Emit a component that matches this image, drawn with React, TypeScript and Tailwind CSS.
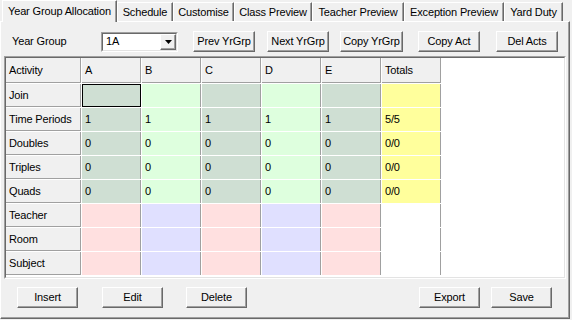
import React from "react";

const FONT = { fontFamily: '"Liberation Sans", Arial, sans-serif' };

function Btn({ label, w, className = "" }: { label: string; w: string; className?: string }) {
  return (
    <div
      className={`${w} h-[21px] flex items-center justify-center bg-[#f0f0f0] border border-t-white border-l-white border-r-[#696969] border-b-[#696969] shadow-[inset_-1px_-1px_0_#a0a0a0] text-black ${className}`}
    >
      {label}
    </div>
  );
}

const tabs = [
  { label: "Schedule", w: "w-[56px]" },
  { label: "Customise", w: "w-[61px]" },
  { label: "Class Preview", w: "w-[78px]" },
  { label: "Teacher Preview", w: "w-[92px]" },
  { label: "Exception Preview", w: "w-[100px]" },
  { label: "Yard Duty", w: "w-[59px]" },
];

const rows = ["Join", "Time Periods", "Doubles", "Triples", "Quads", "Teacher", "Room", "Subject"];
const cols = ["A", "B", "C", "D", "E"];

function cellColor(r: number, c: number): string {
  const odd = c % 2 === 0; // A, C, E
  if (r <= 4) return odd ? "bg-[#cfdfd3]" : "bg-[#deffde]";
  return odd ? "bg-[#ffe0e0]" : "bg-[#e0e0ff]";
}

function cellValue(r: number): string {
  if (r === 1) return "1";
  if (r >= 2 && r <= 4) return "0";
  return "";
}

function totalValue(r: number): string {
  if (r === 1) return "5/5";
  if (r >= 2 && r <= 4) return "0/0";
  return "";
}

export default function App() {
  return (
    <div
      className="w-[572px] h-[320px] bg-[#f0f0f0] overflow-hidden text-[11px] tracking-[-0.15px] text-black leading-none"
      style={FONT}
    >
      {/* Tabs */}
      <div className="relative z-10 flex h-[21px] pl-[2px] items-start">
        <div className="w-[115px] h-[22px] bg-[#f0f0f0] border-l border-t border-r border-l-white border-t-white border-r-[#696969] shadow-[inset_-1px_0_0_#a0a0a0] flex items-center pl-[5px] pb-[1px]">
          Year Group Allocation
        </div>
        {tabs.map((t) => (
          <div
            key={t.label}
            className={`${t.w} h-[19px] mt-[2px] bg-[#f0f0f0] border-l border-t border-r border-l-white border-t-white border-r-[#696969] shadow-[inset_-1px_0_0_#a0a0a0] flex items-center justify-center`}
          >
            {t.label}
          </div>
        ))}
      </div>

      {/* Panel */}
      <div className="w-[570px] h-[298px] border border-t-white border-l-white border-r-[#696969] border-b-[#696969] shadow-[inset_-1px_-1px_0_#a0a0a0] flex flex-col">
        {/* Controls row */}
        <div className="flex items-center h-[21px] mt-[9px]">
          <div className="ml-[11px] w-[89px]">Year Group</div>
          <div className="w-[77px] h-[20px] border border-t-[#a0a0a0] border-l-[#a0a0a0] border-r-white border-b-white">
            <div className="w-full h-full bg-white border border-t-[#696969] border-l-[#696969] border-r-[#e3e3e3] border-b-[#e3e3e3] flex items-center">
              <span className="pl-[3px] flex-1">1A</span>
              <div className="w-[16px] h-full bg-[#f0f0f0] border border-t-white border-l-white border-r-[#696969] border-b-[#696969] shadow-[inset_-1px_-1px_0_#a0a0a0] flex items-center justify-center">
                <svg width="7" height="4" viewBox="0 0 7 4">
                  <polygon points="0,0 7,0 3.5,4" fill="#000" />
                </svg>
              </div>
            </div>
          </div>
          <Btn label="Prev YrGrp" w="w-[62px]" className="ml-[15px]" />
          <Btn label="Next YrGrp" w="w-[62px]" className="ml-[12px]" />
          <Btn label="Copy YrGrp" w="w-[63px]" className="ml-[11px]" />
          <Btn label="Copy Act" w="w-[62px]" className="ml-[15px]" />
          <Btn label="Del Acts" w="w-[62px]" className="ml-[16px]" />
        </div>

        {/* Grid box */}
        <div className="ml-[3px] mt-[4px] w-[562px] h-[223px] border border-t-[#a0a0a0] border-l-[#a0a0a0] border-r-white border-b-white">
          <div className="w-full h-full bg-white border border-t-[#696969] border-l-[#696969] border-r-[#e3e3e3] border-b-[#e3e3e3]">
            <div className="grid w-fit grid-cols-[75px_repeat(6,59px)] grid-rows-[25px_repeat(8,23px)] gap-px bg-white">
              <div className="bg-[#f0f0f0] border-r border-b border-[#a0a0a0] flex items-center pl-[3px]">Activity</div>
              {cols.map((c) => (
                <div key={c} className="bg-[#f0f0f0] border-r border-b border-[#a0a0a0] flex items-center pl-[3px]">
                  {c}
                </div>
              ))}
              <div className="bg-[#f0f0f0] border-r border-b border-[#a0a0a0] flex items-center pl-[3px]">Totals</div>
              {rows.map((r, ri) => (
                <React.Fragment key={r}>
                  <div className="bg-[#f0f0f0] border-r border-b border-[#a0a0a0] flex items-center pl-[3px]">{r}</div>
                  {cols.map((c, ci) => (
                    <div
                      key={c}
                      className={`${cellColor(ri, ci)} border-r border-[#a0a0a0] flex items-center pl-[3px] ${
                        ri === 0 && ci === 0 ? "outline outline-1 outline-black outline-offset-[-1px]" : ""
                      }`}
                    >
                      {cellValue(ri)}
                    </div>
                  ))}
                  <div className={`${ri <= 4 ? "bg-[#ffff9c]" : "bg-white"} border-r border-[#a0a0a0] flex items-center pl-[3px]`}>
                    {totalValue(ri)}
                  </div>
                </React.Fragment>
              ))}
            </div>
          </div>
        </div>

        {/* Bottom buttons */}
        <div className="flex items-center h-[21px] mt-[8px]">
          <Btn label="Insert" w="w-[61px]" className="ml-[16px]" />
          <Btn label="Edit" w="w-[61px]" className="ml-[24px]" />
          <Btn label="Delete" w="w-[61px]" className="ml-[23px]" />
          <Btn label="Export" w="w-[61px]" className="ml-auto" />
          <Btn label="Save" w="w-[61px]" className="ml-[11px] mr-[17px]" />
        </div>
      </div>
    </div>
  );
}
